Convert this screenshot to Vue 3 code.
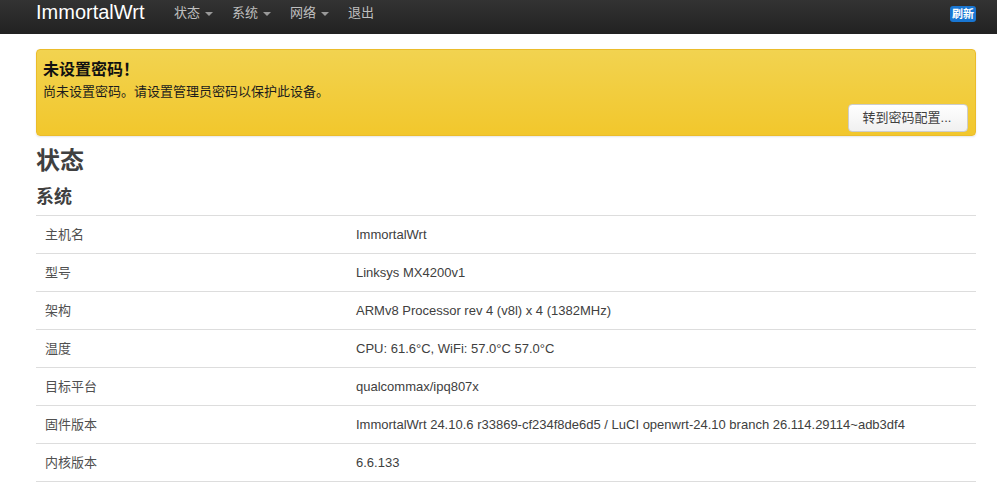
<template>
  <div class="page">
    <header class="navbar">
      <a class="brand">ImmortalWrt</a>
      <ul class="nav">
        <li v-for="item in menu" :key="item.label">
          {{ item.label }}<span v-if="item.caret" class="caret"></span>
        </li>
      </ul>
      <span class="badge">刷新</span>
    </header>

    <main class="content">
      <div class="alert">
        <h4>未设置密码！</h4>
        <p>尚未设置密码。请设置管理员密码以保护此设备。</p>
        <div class="alert-actions">
          <button class="btn">转到密码配置...</button>
        </div>
      </div>

      <h2 class="page-title">状态</h2>
      <h3 class="section-title">系统</h3>

      <div class="table">
        <div class="row" v-for="row in rows" :key="row.name">
          <div class="cell-name">{{ row.name }}</div>
          <div class="cell-value">{{ row.value }}</div>
        </div>
      </div>
    </main>
  </div>
</template>

<script setup>
const menu = [
  { label: '状态', caret: true },
  { label: '系统', caret: true },
  { label: '网络', caret: true },
  { label: '退出', caret: false }
]

const rows = [
  { name: '主机名', value: 'ImmortalWrt' },
  { name: '型号', value: 'Linksys MX4200v1' },
  { name: '架构', value: 'ARMv8 Processor rev 4 (v8l) x 4 (1382MHz)' },
  { name: '温度', value: 'CPU: 61.6°C, WiFi: 57.0°C 57.0°C' },
  { name: '目标平台', value: 'qualcommax/ipq807x' },
  { name: '固件版本', value: 'ImmortalWrt 24.10.6 r33869-cf234f8de6d5 / LuCI openwrt-24.10 branch 26.114.29114~adb3df4' },
  { name: '内核版本', value: '6.6.133' }
]
</script>

<style>
html, body {
  margin: 0;
  background: #fff;
  overflow: hidden;
}
</style>

<style scoped>
.page {
  height: 488px;
  overflow: hidden;
  font-family: "Liberation Sans", "Noto Sans CJK SC", sans-serif;
  font-size: 13px;
  color: #404040;
}

.navbar {
  display: flex;
  align-items: center;
  height: 34px;
  padding: 0 21px 0 36px;
  background: linear-gradient(#333, #222);
  box-sizing: border-box;
}

.brand {
  font-size: 20px;
  line-height: 24px;
  color: #fff;
  margin-top: -10px;
  text-shadow: 0 1px 0 rgba(0, 0, 0, 0.25);
  width: 138px;
}

.nav {
  display: flex;
  gap: 19px;
  list-style: none;
  margin: -8px 0 0;
  padding: 0;
  flex: 1;
}

.nav li {
  color: #bfbfbf;
  line-height: 26px;
}

.caret {
  display: inline-block;
  margin-left: 5px;
  vertical-align: middle;
  border-left: 4px solid transparent;
  border-right: 4px solid transparent;
  border-top: 4px solid #999;
}

.badge {
  background: #1976d2;
  color: #fff;
  font-size: 11px;
  font-weight: bold;
  line-height: 16px;
  padding: 0 2px;
  border-radius: 3px;
  margin-top: -6px;
}

.content {
  padding: 15px 21px 0 36px;
}

.alert {
  display: flex;
  flex-direction: column;
  box-sizing: border-box;
  height: 87px;
  padding: 10px 7px 3px 6px;
  border: 1px solid #ebbc2b;
  border-radius: 4px;
  background: linear-gradient(#f2d350, #f2c72c);
  box-shadow: 0 1px 2px rgba(0, 0, 0, 0.1);
  color: #1c1c1c;
}

.alert h4 {
  margin: 0;
  font-size: 16px;
  line-height: 20px;
  color: #111;
}

.alert p {
  margin: 2px 0 0;
  line-height: 20px;
}

.alert-actions {
  margin-top: auto;
  display: flex;
  justify-content: flex-end;
}

.btn {
  width: 120px;
  height: 28px;
  padding: 0 2px 3px 0;
  border: 1px solid #ccc;
  border-radius: 4px;
  background: linear-gradient(#fff, #f0f0f0);
  font: inherit;
  color: #404040;
}

.page-title {
  margin: 11px 0 0;
  font-size: 24px;
  line-height: 28px;
}

.section-title {
  margin: 10px 0 0;
  font-size: 18px;
  line-height: 24px;
}

.table {
  margin-top: 6px;
  border-top: 1px solid #ddd;
}

.row {
  display: flex;
  align-items: center;
  height: 37px;
  border-bottom: 1px solid #ddd;
}

.cell-name {
  width: 311px;
  padding: 0 0 2px 9px;
  color: #505050;
}
</style>
